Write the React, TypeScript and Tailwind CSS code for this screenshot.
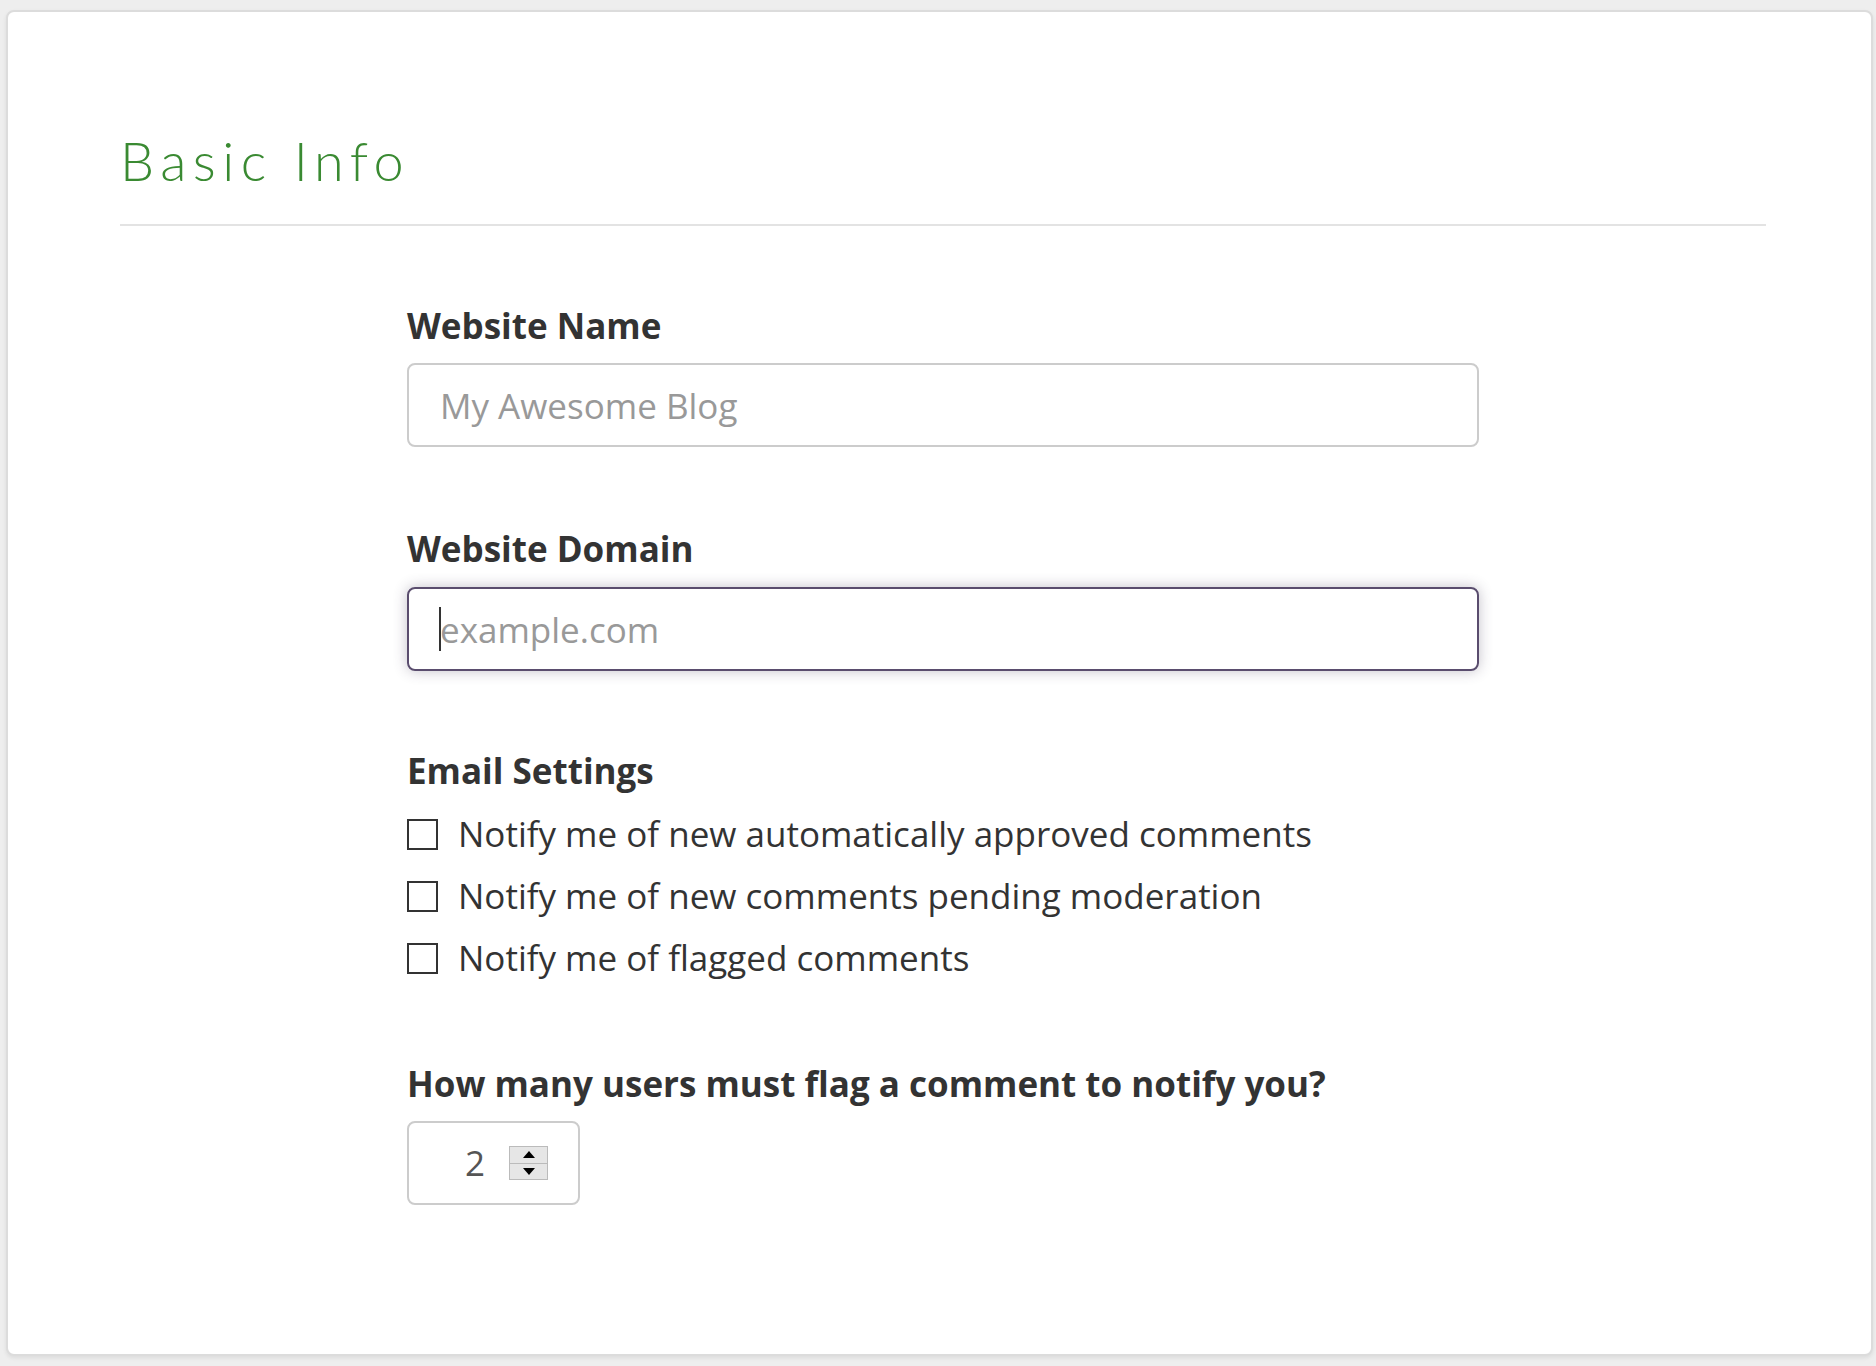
import { useState } from 'react';

const emailOptions = [
  'Notify me of new automatically approved comments',
  'Notify me of new comments pending moderation',
  'Notify me of flagged comments',
];

const Label = ({ children }: { children: React.ReactNode }) => (
  <label className="block text-[35px] leading-[42px] font-bold text-[#333]">{children}</label>
);

const App = () => {
  const [checked, setChecked] = useState<boolean[]>([false, false, false]);

  return (
    <div className="min-h-screen bg-[#eeeeee] pt-[10px] pl-[6px] pr-[3px] pb-[10px] font-['Open_Sans',sans-serif]">
      <div className="h-[1346px] bg-white rounded-[8px] border-2 border-[#dcdcdc] shadow-[0_2px_4px_rgba(0,0,0,0.08)] pt-[116px] pl-[112px] pr-[105px]">
        <h1 className="font-['Lato',sans-serif] font-light text-[54px] leading-[65px] tracking-[0.12em] text-[#3a8a32]">
          Basic Info
        </h1>
        <div className="mt-[31px] h-[2px] bg-[#e3e3e3]" />

        <form className="w-[1072px] mx-auto mt-[79px]">
          {/* Website name */}
          <Label>Website Name</Label>
          <input
            type="text"
            placeholder="My Awesome Blog"
            className="mt-[16px] block w-full h-[84px] rounded-[8px] border-2 border-[#cccccc] px-[31px] text-[35px] text-[#333] outline-none placeholder:text-[#999]"
          />

          {/* Website domain, shown focused */}
          <div className="mt-[81px]">
            <Label>Website Domain</Label>
          </div>
          <div className="relative mt-[17px]">
            <input
              type="text"
              placeholder="example.com"
              className="block w-full h-[84px] rounded-[8px] border-2 border-[#5a4d6e] px-[31px] text-[35px] text-[#333] outline-none placeholder:text-[#999] shadow-[0_0_14px_rgba(60,50,80,0.3)]"
            />
            <span className="absolute left-[32px] top-[20px] h-[44px] w-[1.5px] bg-[#333]" />
          </div>

          {/* Email settings */}
          <h3 className="mt-[79px] text-[35px] leading-[42px] font-bold text-[#333]">Email Settings</h3>
          <div className="mt-[11px] flex flex-col">
            {emailOptions.map((text, i) => (
              <label key={text} className="flex items-center h-[62px] cursor-pointer">
                <span
                  onClick={() => setChecked(checked.map((c, j) => (j === i ? !c : c)))}
                  className="w-[31px] h-[31px] border-2 border-[#333] bg-white flex items-center justify-center shrink-0"
                >
                  {checked[i] && <span className="w-[17px] h-[17px] bg-[#333]" />}
                </span>
                <span className="ml-[20px] text-[35px] leading-[62px] text-[#333]">{text}</span>
              </label>
            ))}
          </div>

          {/* Flag threshold */}
          <div className="mt-[74px]">
            <Label>How many users must flag a comment to notify you?</Label>
          </div>
          <div className="mt-[16px] w-[173px] h-[84px] rounded-[8px] border-2 border-[#cccccc] flex items-center pl-[56px]">
            <span className="text-[35px] text-[#555] w-[44px]">2</span>
            <div className="flex flex-col w-[39px] h-[34px] border border-[#bbbbbb] bg-[#e6e6e6]">
              <div className="flex-1 flex items-center justify-center border-b border-[#bbbbbb]">
                <svg width="12" height="7" viewBox="0 0 12 7">
                  <polygon points="6,0 12,7 0,7" fill="#000" />
                </svg>
              </div>
              <div className="flex-1 flex items-center justify-center">
                <svg width="12" height="7" viewBox="0 0 12 7">
                  <polygon points="0,0 12,0 6,7" fill="#000" />
                </svg>
              </div>
            </div>
          </div>
        </form>
      </div>
    </div>
  );
};

export default App;
